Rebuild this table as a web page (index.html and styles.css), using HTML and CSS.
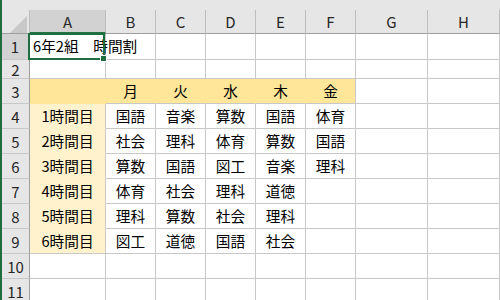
FILE: index.html
```html
<!DOCTYPE html>
<html lang="ja">
<head>
<meta charset="utf-8">
<title>6年2組 時間割</title>
<link rel="stylesheet" href="styles.css">
</head>
<body>
<div class="sheet">
  <div class="strip"></div>

  <div class="corner"><div class="tri"></div></div>
  <div class="ch sel">A</div>
  <div class="ch">B</div>
  <div class="ch">C</div>
  <div class="ch">D</div>
  <div class="ch">E</div>
  <div class="ch">F</div>
  <div class="ch">G</div>
  <div class="ch">H</div>

  <div class="rh sel">1</div>
  <div class="c a1"><span class="title">6年2組　時間割</span><div class="selection"><div class="handle"></div></div></div>
  <div class="c"></div><div class="c"></div><div class="c"></div><div class="c"></div><div class="c"></div><div class="c"></div><div class="c"></div>

  <div class="rh">2</div>
  <div class="c"></div><div class="c"></div><div class="c"></div><div class="c"></div><div class="c"></div><div class="c"></div><div class="c"></div><div class="c"></div>

  <div class="rh">3</div>
  <div class="c day first"></div>
  <div class="c day">月</div>
  <div class="c day">火</div>
  <div class="c day">水</div>
  <div class="c day">木</div>
  <div class="c day last">金</div>
  <div class="c"></div><div class="c"></div>

  <div class="rh">4</div>
  <div class="c per">1時間目</div>
  <div class="c">国語</div><div class="c">音楽</div><div class="c">算数</div><div class="c">国語</div><div class="c">体育</div>
  <div class="c"></div><div class="c"></div>

  <div class="rh">5</div>
  <div class="c per">2時間目</div>
  <div class="c">社会</div><div class="c">理科</div><div class="c">体育</div><div class="c">算数</div><div class="c">国語</div>
  <div class="c"></div><div class="c"></div>

  <div class="rh">6</div>
  <div class="c per">3時間目</div>
  <div class="c">算数</div><div class="c">国語</div><div class="c">図工</div><div class="c">音楽</div><div class="c">理科</div>
  <div class="c"></div><div class="c"></div>

  <div class="rh">7</div>
  <div class="c per">4時間目</div>
  <div class="c">体育</div><div class="c">社会</div><div class="c">理科</div><div class="c">道徳</div><div class="c"></div>
  <div class="c"></div><div class="c"></div>

  <div class="rh">8</div>
  <div class="c per">5時間目</div>
  <div class="c">理科</div><div class="c">算数</div><div class="c">社会</div><div class="c">理科</div><div class="c"></div>
  <div class="c"></div><div class="c"></div>

  <div class="rh">9</div>
  <div class="c per lastper">6時間目</div>
  <div class="c">図工</div><div class="c">道徳</div><div class="c">国語</div><div class="c">社会</div><div class="c"></div>
  <div class="c"></div><div class="c"></div>

  <div class="rh">10</div>
  <div class="c"></div><div class="c"></div><div class="c"></div><div class="c"></div><div class="c"></div><div class="c"></div><div class="c"></div><div class="c"></div>

  <div class="rh">11</div>
  <div class="c"></div><div class="c"></div><div class="c"></div><div class="c"></div><div class="c"></div><div class="c"></div><div class="c"></div><div class="c"></div>
</div>
</body>
</html>
```
FILE: styles.css
```css
html, body {
  margin: 0;
  padding: 0;
  width: 500px;
  height: 300px;
  overflow: hidden;
  background: #ffffff;
}

.sheet {
  display: grid;
  grid-template-columns: 28px 76px 50px 50px 50px 50px 50px 72px 72px;
  grid-template-rows: 10px 24px 26px 19px 25px 25px 25px 25px 25px 25px 25px 25px 25px;
  border-left: 2px solid #1e6e3f;
  width: 498px;
  font-family: "Noto Sans CJK JP", "Noto Sans", sans-serif;
  color: #000;
}

.strip {
  grid-column: 1 / -1;
  background: #e6e6e6;
}

.corner {
  background: #e6e6e6;
  border-right: 1px solid #bdbdbd;
  border-bottom: 1px solid #9e9e9e;
  display: flex;
  justify-content: flex-end;
  align-items: flex-end;
  padding-right: 2px;
  box-sizing: border-box;
}

.tri {
  width: 17px;
  height: 17px;
  background: #c8c8c8;
  clip-path: polygon(100% 0, 100% 100%, 0 100%);
}

.ch {
  background: #e6e6e6;
  border-right: 1px solid #bdbdbd;
  border-bottom: 1px solid #9e9e9e;
  box-sizing: border-box;
  display: flex;
  align-items: center;
  justify-content: center;
  font-size: 15px;
  color: #262626;
  line-height: 1;
}

.ch.sel {
  background: #d2d2d2;
  border-bottom: 2px solid #217346;
  padding-top: 1px;
}

.rh {
  background: #e6e6e6;
  border-right: 1px solid #9e9e9e;
  border-bottom: 1px solid #c8c8c8;
  box-sizing: border-box;
  display: flex;
  align-items: center;
  justify-content: center;
  font-size: 15px;
  color: #262626;
  line-height: 1;
}

.rh.sel {
  background: #d2d2d2;
  border-right: 2px solid #217346;
}

.c {
  border-right: 1px solid #c8c8c8;
  border-bottom: 1px solid #c8c8c8;
  box-sizing: border-box;
  display: flex;
  align-items: center;
  justify-content: center;
  font-size: 14.67px;
  line-height: 1;
  white-space: nowrap;
  min-width: 0;
}

.a1 {
  position: relative;
  justify-content: flex-start;
  padding-left: 3px;
  overflow: visible;
  z-index: 2;
}

.title {
  position: relative;
}

.selection {
  position: absolute;
  left: -2px;
  right: 0;
  top: -1px;
  bottom: -1px;
  border: 2px solid #1e6e3f;
  box-sizing: border-box;
}

.handle {
  position: absolute;
  right: -4px;
  bottom: -4px;
  width: 7px;
  height: 7px;
  box-sizing: border-box;
  background: #1e6e3f;
  border: 1px solid #ffffff;
}

.day {
  background: #ffe699;
  border-right-color: #ffe699;
}

.day.last {
  border-right-color: #c8c8c8;
}

.day.first {
  border-bottom-color: #ffe699;
}

.per {
  background: #fff2cc;
  border-bottom-color: #fff2cc;
}

.per.lastper {
  border-bottom-color: #c8c8c8;
}
```
